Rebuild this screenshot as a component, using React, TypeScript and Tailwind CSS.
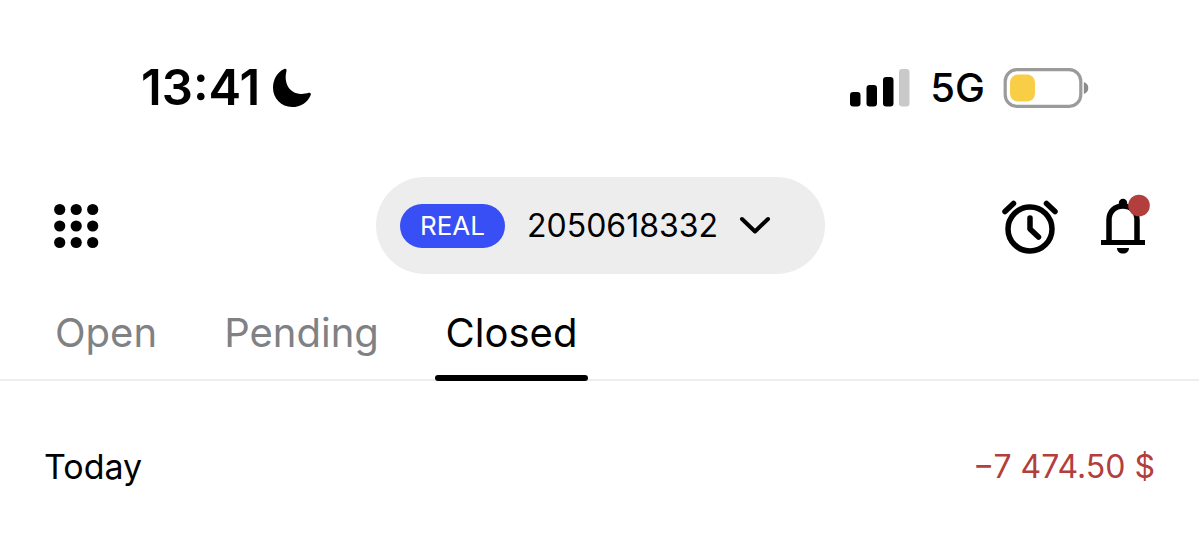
import React, { useState } from "react";

const tabs = [
  { name: "Open", width: "w-[124px]" },
  { name: "Pending", width: "w-[177px]" },
  { name: "Closed", width: "w-[153px]" },
];

const dots = [9, 25.5, 42];

function StatusBar() {
  return (
    <div className="flex h-[177px] items-start justify-between pt-[59px] pr-[110px] pl-[141px]">
      <div className="flex h-[58px] items-center gap-3">
        <time className="text-[49px] leading-[58px] font-semibold">13:41</time>
        <svg className="size-10" viewBox="0 0 40 40" role="img" aria-label="Do not disturb">
          <path d="M12.2 1.1C13.5.4 15 1.4 14.5 3C11.5 14.5 17 25.5 29 26C32 26.1 34.5 25.5 36.8 24.8C38.4 24.4 39.3 25.5 38.7 26.9C35.5 34.600 28.5 39 20 39C9.3 39 1 30.5 1 19.8C1 11.3 5.5 4.2 12.2 1.1Z" />
        </svg>
      </div>
      <div className="flex h-[58px] items-center">
        <svg className="h-[38px] w-[60px]" viewBox="0 0 60 38" role="img" aria-label="Signal strength">
          <rect x="0" y="23" width="10.5" height="14.5" rx="3.2" />
          <rect x="16.5" y="16" width="10.5" height="21.5" rx="3.2" />
          <rect x="33" y="8" width="10.5" height="29.5" rx="3.2" />
          <rect x="49" y="0" width="10.5" height="37.5" rx="3.2" fill="#c9c9c9" />
        </svg>
        <span className="ml-5 text-[40px] leading-[58px] font-medium">5G</span>
        <svg className="ml-[18px] h-10 w-[86px]" viewBox="0 0 86 40" role="img" aria-label="Battery low">
          <rect x="2.2" y="1.700" width="75.6" height="36.6" rx="11.5" fill="white" stroke="#9b9b9b" strokeWidth="3.2" />
          <rect x="7" y="6.500" width="25" height="27" rx="8" fill="#f7ce46" />
          <path d="M80.800 14C83.700 15 85.300 17.300 85.300 20S83.700 25 80.800 26Z" fill="#8b8b8b" />
        </svg>
      </div>
    </div>
  );
}

function Header() {
  return (
    <header className="grid grid-cols-[1fr_auto_1fr] items-center pr-[49px] pl-[51px]">
      <button aria-label="Menu" className="size-[50px]">
        <svg viewBox="0 0 50 50" aria-hidden="true">
          {dots.map((y) => dots.map((x) => <circle key={`${x}-${y}`} cx={x - 0.3} cy={y - 0.5} r="5.6" />))}
        </svg>
      </button>
      <button className="flex h-[97px] w-[449px] items-center rounded-full bg-[#ededed] pl-6">
        <span className="flex h-11 w-[105px] items-center justify-center rounded-full bg-[#384ff5] text-[26px] text-white">
          REAL
        </span>
        <span className="ml-[22px] w-[190px] text-left text-[32px]">2050618332</span>
        <svg className="ml-[22px] h-5 w-8" viewBox="0 0 32 20" fill="none" stroke="black" strokeWidth="4" strokeLinecap="round" strokeLinejoin="round" aria-hidden="true">
          <path d="M3 3L16 15.500L29 3" />
        </svg>
      </button>
      <div className="flex items-center justify-end gap-10">
        <button aria-label="Price alerts" className="size-[60px]">
          <svg viewBox="0 0 60 60" fill="none" stroke="black" strokeWidth="5.5" strokeLinecap="round" strokeLinejoin="round" aria-hidden="true">
            <circle cx="30" cy="33" r="22" />
            <path d="M30 22V33L38.5 41M5 15.5L13.5 7.5M46.500 7.500L55 15.5" />
          </svg>
        </button>
        <button aria-label="Notifications" className="h-[64px] w-[50px]">
          <svg viewBox="0 0 50 64" aria-hidden="true">
            <path d="M1 46H45V51H1ZM17 54H29C29 57.5 26.5 59.5 23 59.5S17 57.5 17 54Z" />
            <path d="M9 47V26C9 17.5 15 12 23 12S37 17.5 37 26V47" fill="none" stroke="black" strokeWidth="5.5" />
            <circle cx="23" cy="9" r="4.2" />
            <circle cx="39" cy="11.5" r="10.8" fill="#b23f3d" />
          </svg>
        </button>
      </div>
    </header>
  );
}

export default function App() {
  const [active, setActive] = useState("Closed");
  return (
    <main className="min-h-screen bg-white font-['Inter','Liberation_Sans',sans-serif] text-black">
      <StatusBar />
      <Header />
      <nav className="flex h-[107px] gap-[45px] border-b-2 border-[#ededed] px-11" role="tablist">
        {tabs.map((tab) => (
          <button
            key={tab.name}
            role="tab"
            aria-selected={active === tab.name}
            onClick={() => setActive(tab.name)}
            className={`relative ${tab.width} pt-3 text-[40px] ${active === tab.name ? "text-black" : "text-[#808184]"}`}
          >
            {tab.name}
            {active === tab.name && <span className="absolute inset-x-0 -bottom-[2px] h-[6px] rounded-full bg-black" />}
          </button>
        ))}
      </nav>
      <section className="flex items-center justify-between px-11 pt-[62px] leading-[48px]">
        <h2 className="text-[34px]">Today</h2>
        <span className="text-[32px] text-[#b23f3d]">−7 474.50 $</span>
      </section>
    </main>
  );
}
